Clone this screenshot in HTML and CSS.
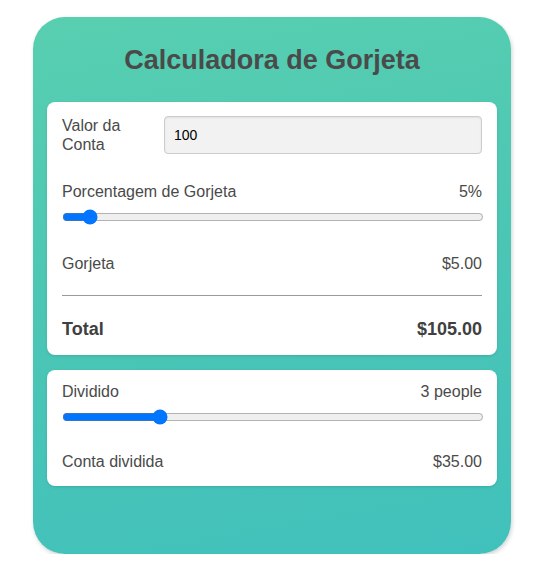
FILE: index.html
```html
<!DOCTYPE html>
<html lang="pt">
<head>
<meta charset="utf-8">
<title>Calculadora de Gorjeta</title>
<link rel="stylesheet" href="styles.css">
</head>
<body>
<div class="calculator">
  <h1 class="title">Calculadora de Gorjeta</h1>
  <div class="card">
    <div class="bill-row">
      <label class="bill-label" for="bill">Valor da Conta</label>
      <input class="bill-input" id="bill" type="text" value="100">
    </div>
    <div class="row row-head">
      <span>Porcentagem de Gorjeta</span>
      <span>5%</span>
    </div>
    <input class="slider" type="range" min="0" max="100" value="5">
    <div class="row row-result">
      <span>Gorjeta</span>
      <span>$5.00</span>
    </div>
    <hr class="divider">
    <div class="row row-total">
      <span>Total</span>
      <span>$105.00</span>
    </div>
  </div>
  <div class="card card-split">
    <div class="row row-head row-first">
      <span>Dividido</span>
      <span>3 people</span>
    </div>
    <input class="slider" type="range" min="1" max="10" value="3">
    <div class="row row-result row-last">
      <span>Conta dividida</span>
      <span>$35.00</span>
    </div>
  </div>
</div>
</body>
</html>
```

FILE: styles.css
```css
html, body {
  margin: 0;
  padding: 0;
  background: #ffffff;
}
body {
  padding: 17px 22px 0 33px;
  font-family: "Liberation Sans", Arial, sans-serif;
  color: #4a4a4a;
}
.calculator {
  width: 478px;
  height: 537px;
  box-sizing: border-box;
  padding: 0 14px;
  border-radius: 32px;
  background: linear-gradient(170deg, #58cfb0 0%, #4bc6b5 50%, #41c1bc 100%);
  box-shadow: 1px 2px 4px rgba(0, 0, 0, 0.18);
}
.title {
  margin: 0;
  padding: 28px 0 0;
  height: 58px;
  box-sizing: border-box;
  text-align: center;
  font-size: 27px;
  line-height: 30px;
  font-weight: bold;
  color: #4a4a4a;
}
.card {
  margin-top: 27px;
  background: #ffffff;
  border-radius: 8px;
  padding: 14px 15px 15px;
  box-shadow: 0 1px 3px rgba(0, 0, 0, 0.12);
}
.card-split {
  margin-top: 15px;
  padding-top: 13px;
}
.bill-row {
  display: flex;
  align-items: center;
}
.bill-label {
  width: 102px;
  flex: none;
  font-size: 16px;
  line-height: 19px;
  color: #4a4a4a;
}
.bill-input {
  flex: 1;
  min-width: 0;
  height: 38px;
  box-sizing: border-box;
  padding: 0 9px;
  border: 1px solid #cccccc;
  border-radius: 4px;
  background: #f2f2f2;
  font-family: "Liberation Sans", Arial, sans-serif;
  font-size: 14px;
  color: #000000;
  box-shadow: inset 0 1px 2px rgba(0, 0, 0, 0.08);
}
.row {
  display: flex;
  justify-content: space-between;
  align-items: center;
  font-size: 16px;
  line-height: 18px;
}
.row-head {
  margin-top: 29px;
}
.row-first {
  margin-top: 0;
}
.slider {
  display: block;
  width: calc(100% + 2px);
  margin: 8px 0 0;
  height: 16px;
  accent-color: #0075ff;
}
.row-result {
  margin-top: 30px;
}
.divider {
  margin: 22px 0 0;
  border: 0;
  border-top: 1px solid #999999;
  height: 0;
}
.row-total {
  margin-top: 23px;
  font-size: 18px;
  line-height: 21px;
  font-weight: bold;
  color: #404040;
}
.row-last {
  margin-top: 28px;
}
```
